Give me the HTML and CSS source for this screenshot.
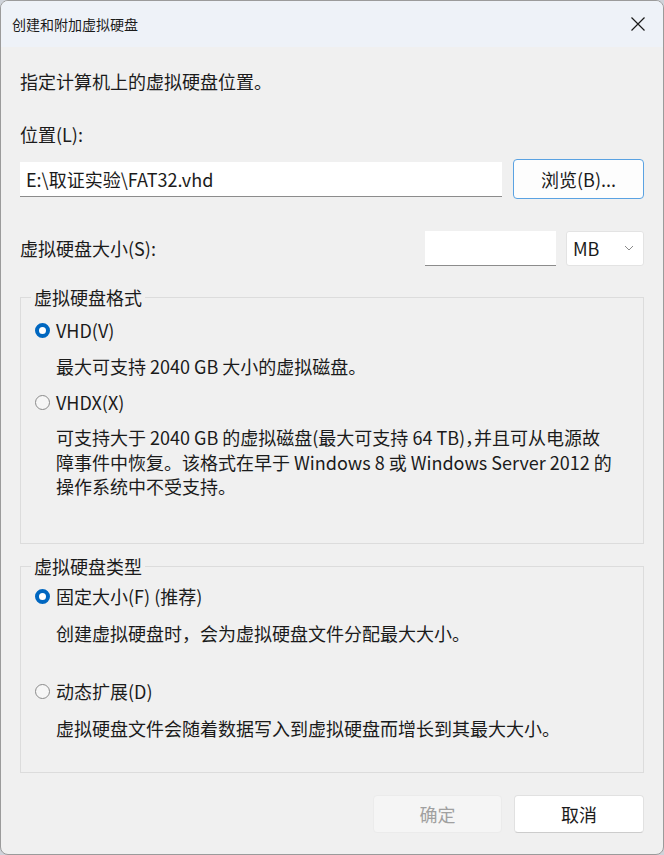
FILE: index.html
```html
<!DOCTYPE html>
<html lang="zh-CN">
<head>
<meta charset="utf-8">
<title>创建和附加虚拟硬盘</title>
<link rel="stylesheet" href="styles.css">
</head>
<body>
<div class="window">
  <div class="titlebar">
    <span class="title">创建和附加虚拟硬盘</span>
    <span class="close">
      <svg width="16" height="16" viewBox="0 0 16 16"><path d="M1.5 1.5 L14.5 14.5 M14.5 1.5 L1.5 14.5" stroke="#1a1a1a" stroke-width="1.2" fill="none"/></svg>
    </span>
  </div>
  <div class="content">
    <div class="intro">指定计算机上的虚拟硬盘位置。</div>
    <div class="label-loc">位置(L):</div>
    <div class="loc-row">
      <div class="textbox loc-input">E:\取证实验\FAT32.vhd</div>
      <div class="btn browse">浏览(B)...</div>
    </div>
    <div class="size-row">
      <div class="size-label">虚拟硬盘大小(S):</div>
      <div class="textbox size-input"></div>
      <div class="combo">
        <span>MB</span>
        <svg width="10" height="6" viewBox="0 0 10 6"><path d="M1 1 L5 5 L9 1" stroke="#8a8a8a" stroke-width="1" fill="none"/></svg>
      </div>
    </div>

    <fieldset class="group group-format">
      <legend>虚拟硬盘格式</legend>
      <div class="radio-row r-vhd"><span class="radio checked"></span><span>VHD(V)</span></div>
      <div class="desc d-vhd">最大可支持 2040 GB 大小的虚拟磁盘。</div>
      <div class="radio-row r-vhdx"><span class="radio"></span><span>VHDX(X)</span></div>
      <div class="desc para d-vhdx">可支持大于 2040 GB 的虚拟磁盘(最大可支持 64 TB)<span class="halt">，</span>并且可从电源故<br>障事件中恢复。该格式在早于 Windows 8 或 Windows Server 2012 的<br>操作系统中不受支持。</div>
    </fieldset>

    <fieldset class="group group-type">
      <legend>虚拟硬盘类型</legend>
      <div class="radio-row r-fixed"><span class="radio checked"></span><span>固定大小(F) (推荐)</span></div>
      <div class="desc d-fixed">创建虚拟硬盘时，会为虚拟硬盘文件分配最大大小。</div>
      <div class="radio-row r-dyn"><span class="radio"></span><span>动态扩展(D)</span></div>
      <div class="desc d-dyn">虚拟硬盘文件会随着数据写入到虚拟硬盘而增长到其最大大小。</div>
    </fieldset>

    <div class="buttons">
      <div class="btn ok disabled">确定</div>
      <div class="btn cancel">取消</div>
    </div>
  </div>
</div>
</body>
</html>
```
FILE: styles.css
```css
* { box-sizing: border-box; }
html, body { margin: 0; padding: 0; }
body {
  background: #cfd3da;
  font-family: "Noto Sans CJK SC", "Noto Sans", sans-serif;
  color: #1b1b1b;
  font-size: 18px;
}
.window {
  width: 664px;
  height: 855px;
  border: 1px solid #9b9b9b;
  border-radius: 8px;
  overflow: hidden;
  background: #f0f0f0;
}
.titlebar {
  height: 46px;
  background: #eef2f8;
  display: flex;
  align-items: center;
  justify-content: space-between;
  padding-left: 11px;
  padding-right: 9px;
}
.title {
  font-size: 14px;
  line-height: 20px;
}
.close {
  width: 16px;
  height: 16px;
  margin-right: 8px;
  display: flex;
}
.content {
  padding: 0 19px;
}
.intro {
  margin-top: 22px;
  line-height: 24px;
  height: 24px;
}
.label-loc {
  margin-top: 29px;
  line-height: 24px;
  height: 24px;
}
.loc-row {
  margin-top: 13px;
  height: 40px;
  display: flex;
  align-items: center;
  gap: 11px;
}
.textbox {
  background: #ffffff;
  border-bottom: 1px solid #8c8c8c;
  height: 35px;
}
.loc-input {
  width: 482px;
  padding-left: 6px;
  line-height: 34px;
}
.btn {
  border-radius: 4px;
  display: flex;
  align-items: center;
  justify-content: center;
  background: #fdfdfd;
  border: 1px solid #e1e1e1;
  border-bottom-color: #cccccc;
}
.browse {
  width: 131px;
  height: 40px;
  border: 1px solid #5aa2e2;
}
.size-row {
  margin-top: 31px;
  height: 36px;
  display: flex;
  align-items: center;
}
.size-label {
  flex: 1;
  line-height: 24px;
}
.size-input {
  width: 131px;
  margin-right: 10px;
}
.combo {
  width: 78px;
  height: 35px;
  background: #ffffff;
  border: 1px solid #e3e3e3;
  border-radius: 3px;
  display: flex;
  align-items: center;
  justify-content: space-between;
  padding: 0 9px 0 6px;
}
.group {
  margin: 0;
  padding: 0;
  border: 1px solid #dcdcdc;
  min-width: 0;
}
.group legend {
  margin-left: 10px;
  padding: 0 3px;
  line-height: 24px;
}
.group-format {
  margin-top: 19px;
  height: 259px;
}
.group-type {
  margin-top: 10px;
  height: 219px;
}
.radio-row {
  display: flex;
  align-items: center;
  height: 24px;
  line-height: 24px;
  padding-left: 14px;
  gap: 6px;
}
.radio {
  width: 15px;
  height: 15px;
  border-radius: 50%;
  border: 1px solid #8a8a8a;
  background: #f6f6f6;
  flex: none;
}
.radio.checked {
  border: 4.5px solid #0067c0;
  background: #ffffff;
}
.desc {
  padding-left: 35px;
  line-height: 24px;
  white-space: nowrap;
}
.para {
  line-height: 24.5px;
}
.halt {
  font-feature-settings: "halt";
}
.r-vhd { margin-top: 9px; }
.d-vhd { margin-top: 12px; }
.r-vhdx { margin-top: 12px; }
.d-vhdx { margin-top: 11px; }
.r-fixed { margin-top: 6px; }
.d-fixed { margin-top: 13px; }
.r-dyn { margin-top: 34px; }
.d-dyn { margin-top: 13px; }
.buttons {
  margin-top: 22px;
  display: flex;
  justify-content: flex-end;
  gap: 12px;
}
.ok, .cancel {
  width: 129px;
  height: 38px;
}
.ok.disabled {
  background: #f5f5f5;
  border-color: #ebebeb;
  color: #a0a0a0;
}
.cancel {
  background: #ffffff;
  width: 130px;
}
```
